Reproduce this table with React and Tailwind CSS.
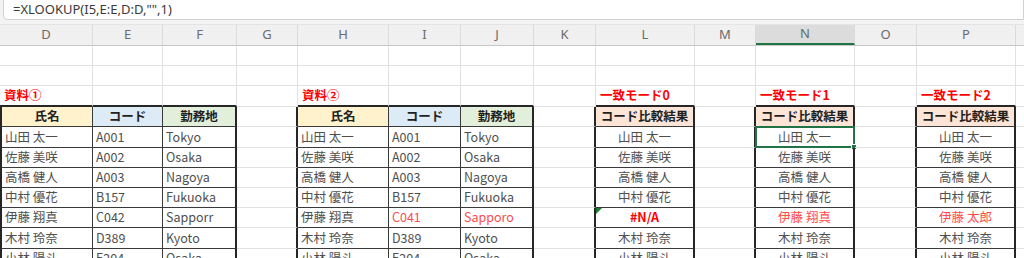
import React from 'react';

// column widths of D..Q, in px
const COL_W = ['w-[93px]', 'w-[70px]', 'w-[74px]', 'w-[61px]', 'w-[91px]', 'w-[72px]', 'w-[73px]', 'w-[62px]', 'w-[99px]', 'w-[61px]', 'w-[99px]', 'w-[62px]', 'w-[99px]', 'w-[60px]'];
const LETTERS = ['D', 'E', 'F', 'G', 'H', 'I', 'J', 'K', 'L', 'M', 'N', 'O', 'P', ''];
const ROW_H = ['h-[20px]', 'h-[20px]', 'h-[21px]', 'h-[20px]', 'h-[21px]', 'h-[20px]', 'h-[20px]', 'h-[20px]', 'h-[20px]', 'h-[21px]', 'h-[20px]'];

const TABLES = [[0, 1, 2], [4, 5, 6], [8], [10], [12]];
const tableOf = (c) => TABLES.find(t => t.includes(c));

const people = [
    ['山田 太一', 'A001', 'Tokyo'],
    ['佐藤 美咲', 'A002', 'Osaka'],
    ['高橋 健人', 'A003', 'Nagoya'],
    ['中村 優花', 'B157', 'Fukuoka'],
    ['伊藤 翔真', 'C042', 'Sapporr'],
    ['木村 玲奈', 'D389', 'Kyoto'],
    ['小林 陽斗', 'E204', 'Osaka'],
];

const TITLE = 'text-[#ff0000] font-bold pl-[4px]';
const HEAD = 'justify-center font-bold text-[#1f1f1f]';
const TEXT = 'pl-[3px] text-[#4f4f4f]';
const CENTER = 'justify-center text-[#4f4f4f]';
const RED = 'text-[#ff4b4b]';

// content of a cell: [text, classes]
function content(r, c) {
    if (r === 2) {
        const titles = { 0: '資料①', 4: '資料②', 8: '一致モード0', 10: '一致モード1', 12: '一致モード2' };
        if (titles[c]) return [titles[c], TITLE];
        return null;
    }
    if (r === 3) {
        if (c === 0 || c === 4) return ['氏名', `${HEAD} bg-[#fff2cc]`];
        if (c === 1 || c === 5) return ['コード', `${HEAD} bg-[#ddebf7]`];
        if (c === 2 || c === 6) return ['勤務地', `${HEAD} bg-[#e2efda]`];
        if (c === 8 || c === 10 || c === 12) return ['コード比較結果', `${HEAD} bg-[#fce4d6]`];
        return null;
    }
    if (r >= 4) {
        const i = r - 4;
        const [name, code, city] = people[i];
        const odd = i === 4;
        if (c === 0 || c === 4) return [name, TEXT];
        if (c === 1) return [code, TEXT];
        if (c === 2) return [city, TEXT];
        if (c === 5) return odd ? ['C041', `pl-[3px] ${RED}`] : [code, TEXT];
        if (c === 6) return odd ? ['Sapporo', `pl-[3px] ${RED}`] : [city, TEXT];
        if (c === 8) return odd ? ['#N/A', 'justify-center font-bold text-[#ff0000]'] : [name, CENTER];
        if (c === 10) return odd ? ['伊藤 翔真', `justify-center ${RED}`] : [name, CENTER];
        if (c === 12) return odd ? ['伊藤 太郎', `justify-center ${RED}`] : [name, CENTER];
    }
    return null;
}

// each cell owns its right and bottom border, like in Excel
function borders(r, c) {
    const t = tableOf(c);
    const next = tableOf(c + 1);
    let right = 'border-r border-r-[#e1e1e1]';
    let bottom = 'border-b border-b-[#e1e1e1]';
    let left = '';
    if (r >= 3) {
        if (t && t[t.length - 1] === c) right = 'border-r-2 border-r-[#262626]';
        else if (t) right = 'border-r border-r-[#3a3a3a]';
        else if (next) right = 'border-r-2 border-r-[#262626]';
        if (t) bottom = 'border-b border-b-[#3a3a3a]';
        if (c === 0) left = 'border-l-2 border-l-[#262626]';
    }
    if (r === 2 && t) bottom = 'border-b-2 border-b-[#262626]';
    return `${left} ${right} ${bottom}`;
}

const Cell = ({ r, c }) => {
    const data = content(r, c);
    return (
        <div className={`${COL_W[c]} shrink-0 relative flex items-center whitespace-nowrap ${borders(r, c)} ${data ? data[1] : ''}`}>
            {data && data[0]}
            {r === 4 && c === 10 && (
                <div className="absolute -left-[1px] -top-[1px] -right-[2px] -bottom-[1px] border-2 border-[#217346]">
                    <div className="absolute -right-[4px] -bottom-[4px] w-[6px] h-[6px] bg-[#217346] border border-white" />
                </div>
            )}
            {r === 8 && c === 8 && (
                <div className="absolute left-0 top-0 w-0 h-0 border-t-[6px] border-t-[#1e7d32] border-r-[6px] border-r-transparent" />
            )}
        </div>
    );
};

export default function App() {
    return (
        <div className="w-[1024px] h-[258px] overflow-hidden bg-[#f3f3f3] font-['Noto_Sans_CJK_JP',sans-serif] text-[12.5px]">
            {/* formula bar */}
            <div className="h-[21px] ml-[3px] -mt-px bg-white border border-[#d1d1d1] rounded-bl-[4px] flex items-center pl-[9px] text-[13px] text-[#3a3a3a] font-['Noto_Sans',sans-serif]">
                =XLOOKUP(I5,E:E,D:D,"",1)
            </div>
            <div className="h-[4px]" />

            {/* column letters */}
            <div className="flex h-[22px] bg-[#f0f0f0] border-t border-[#e4e4e4] border-b border-b-[#c8c8c8]">
                {LETTERS.map((l, i) => (
                    <div
                        key={i}
                        className={`${COL_W[i]} shrink-0 flex items-center justify-center border-r border-r-[#dadada] text-[13px] font-['Noto_Sans',sans-serif] ${i === 10 ? 'bg-[#dcdcdc] border-b-2 border-b-[#217346] text-[#5b6f66]' : 'text-[#6b6b6b]'}`}
                    >
                        {l}
                    </div>
                ))}
            </div>

            {/* sheet */}
            <div className="bg-white">
                {ROW_H.map((h, r) => (
                    <div key={r} className={`flex ${h}`}>
                        {LETTERS.map((_, c) => <Cell key={c} r={r} c={c} />)}
                    </div>
                ))}
            </div>
        </div>
    );
}
